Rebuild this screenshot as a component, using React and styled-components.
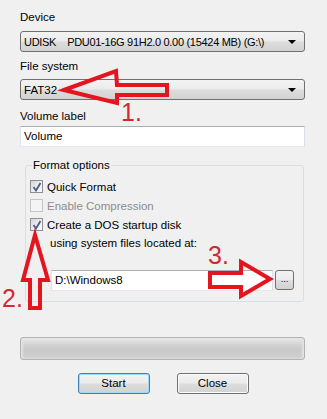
import React from 'react';
import styled, { createGlobalStyle } from 'styled-components';

const Global = createGlobalStyle`
  html, body { margin: 0; padding: 0; background: #f0f0f0; }
`;

const Window = styled.div`
  position: relative;
  width: 327px;
  height: 419px;
  box-sizing: border-box;
  padding: 10px 22px 0 20px;
  background: #f0f0f0;
  font-family: "Liberation Sans", Arial, sans-serif;
  font-size: 11.5px;
  color: #000;
  overflow: hidden;
`;

const Label = styled.div`
  height: 14px;
  line-height: 14px;
  margin-top: ${({ top }) => top || 0}px;
  margin-bottom: ${({ bottom }) => bottom || 0}px;
`;

const Combo = styled.div`
  box-sizing: border-box;
  height: 21px;
  border: 1px solid #707070;
  border-radius: 3px;
  background: linear-gradient(#f3f3f3 0%, #ebebeb 48%, #dddddd 52%, #d2d2d2 100%);
  display: flex;
  align-items: center;
  justify-content: space-between;
  padding: 0 8px 0 3px;
  white-space: pre;
  font-size: ${({ tight }) => (tight ? '11px' : 'inherit')};
  letter-spacing: ${({ tight }) => (tight ? '-0.3px' : '0')};
`;

const DropArrow = styled.span`
  width: 0;
  height: 0;
  border-left: 4px solid transparent;
  border-right: 4px solid transparent;
  border-top: 4px solid #000;
`;

const TextBox = styled.div`
  box-sizing: border-box;
  height: 21px;
  line-height: 19px;
  border: 1px solid #abadb3;
  border-left-color: #e2e3ea;
  border-right-color: #dbdfe6;
  border-bottom-color: #e3e9ef;
  background: #fff;
  padding-left: 3px;
  width: ${({ w }) => (w ? `${w}px` : 'auto')};
`;

const Group = styled.fieldset`
  margin: 11px 1px 0 5px;
  padding: 7px 4px 10px 4px;
  border: 1px solid #d5dfe5;
  border-radius: 3px;
  min-width: 0;
`;

const Legend = styled.legend`
  padding: 0 1px;
  margin-left: 2px;
  height: 14px;
  line-height: 14px;
`;

const CheckRow = styled.div`
  display: flex;
  align-items: center;
  height: 15px;
  margin-bottom: 4px;
  color: ${({ disabled }) => (disabled ? '#8d8d8d' : '#000')};
`;

const Box = styled.span`
  box-sizing: border-box;
  width: 13px;
  height: 13px;
  margin-right: 4px;
  border: 1px solid ${({ disabled }) => (disabled ? '#c4c4c4' : '#8e8f8f')};
  background: ${({ disabled }) =>
    disabled ? '#f4f4f4' : 'linear-gradient(135deg, #d6d6d6 0%, #f0f0f0 60%, #fafafa 100%)'};
  display: flex;
  align-items: center;
  justify-content: center;
`;

const SubText = styled.div`
  height: 14px;
  line-height: 14px;
  padding-left: 20px;
`;

const PathRow = styled.div`
  display: flex;
  align-items: flex-start;
  margin: 20px 0 0 21px;
`;

const SmallButton = styled.div`
  box-sizing: border-box;
  width: 19px;
  height: 20px;
  margin-left: 2px;
  border: 1px solid #707070;
  border-radius: 3px;
  background: linear-gradient(#f3f3f3 0%, #ebebeb 48%, #dddddd 52%, #d2d2d2 100%);
  font-size: 9px;
  line-height: 16px;
  text-align: center;
`;

const Progress = styled.div`
  box-sizing: border-box;
  height: 23px;
  margin-top: 35px;
  border: 1px solid #b2b2b2;
  border-radius: 3px;
  background: linear-gradient(#e9e9e9 0%, #d4d4d4 30%, #c9c9c9 55%, #d0d0d0 100%);
  box-shadow: inset 2px 0 2px #e2e2e2, inset -2px 0 2px #e2e2e2;
`;

const Buttons = styled.div`
  display: flex;
  justify-content: center;
  gap: 27px;
  margin-top: 13px;
  padding-left: 1px;
`;

const Button = styled.div`
  box-sizing: border-box;
  width: 72px;
  height: 21px;
  line-height: 19px;
  text-align: center;
  border: 1px solid ${({ primary }) => (primary ? '#3c7fb1' : '#707070')};
  border-radius: 3px;
  background: linear-gradient(#f3f3f3 0%, #ebebeb 48%, #dddddd 52%, #d2d2d2 100%);
  box-shadow: ${({ primary }) => (primary ? 'inset 0 0 0 1px #9fdcf3' : 'inset 0 0 0 1px #fbfbfb')};
`;

const Overlay = styled.svg`
  position: absolute;
  left: 0;
  top: 0;
  pointer-events: none;
`;

const Num = styled.span`
  position: absolute;
  left: ${({ x }) => x}px;
  top: ${({ y }) => y}px;
  font-family: "Liberation Sans", Arial, sans-serif;
  font-size: 25px;
  line-height: 25px;
  color: #d12a31;
`;

const Check = () => (
  <svg width="10" height="10" viewBox="0 0 10 10">
    <path d="M1.5 5 L4 8.5 L8.5 1" fill="none" stroke="#4a5d8e" strokeWidth="1.8" />
  </svg>
);

const Checkbox = ({ checked, disabled, children }) => (
  <CheckRow disabled={disabled}>
    <Box disabled={disabled}>{checked && <Check />}</Box>
    {children}
  </CheckRow>
);

const App = () => {
  return (
    <Window>
      <Global />
      <Label bottom={7}>Device</Label>
      <Combo tight>
        <span>UDISK    PDU01-16G 91H2.0 0.00 (15424 MB) (G:\)</span>
        <DropArrow />
      </Combo>
      <Label top={7} bottom={6}>File system</Label>
      <Combo>
        <span>FAT32</span>
        <DropArrow />
      </Combo>
      <Label top={9} bottom={3}>Volume label</Label>
      <TextBox>Volume</TextBox>

      <Group>
        <Legend>Format options</Legend>
        <Checkbox checked>Quick Format</Checkbox>
        <Checkbox disabled>Enable Compression</Checkbox>
        <Checkbox checked>Create a DOS startup disk</Checkbox>
        <SubText>using system files located at:</SubText>
        <PathRow>
          <TextBox w={222}>D:\Windows8</TextBox>
          <SmallButton>...</SmallButton>
        </PathRow>
      </Group>

      <Progress />
      <Buttons>
        <Button primary>Start</Button>
        <Button>Close</Button>
      </Buttons>

      <Overlay width="327" height="419" viewBox="0 0 327 419">
        <g fill="none" stroke="#e3151e" strokeWidth="4" strokeLinejoin="miter">
          <polygon points="64,90 116,71 117,85 167,85 167,95 117,95 117,103" />
          <polygon points="35,235 48,280 40,280 40,308 30,308 30,280 23,280" />
          <polygon points="270,279 241,262 241,273 210,273 210,287 241,287 241,296" />
        </g>
      </Overlay>
      <Num x={121} y={100}>1.</Num>
      <Num x={2} y={286}>2.</Num>
      <Num x={208} y={243}>3.</Num>
    </Window>
  );
};

export default App;
